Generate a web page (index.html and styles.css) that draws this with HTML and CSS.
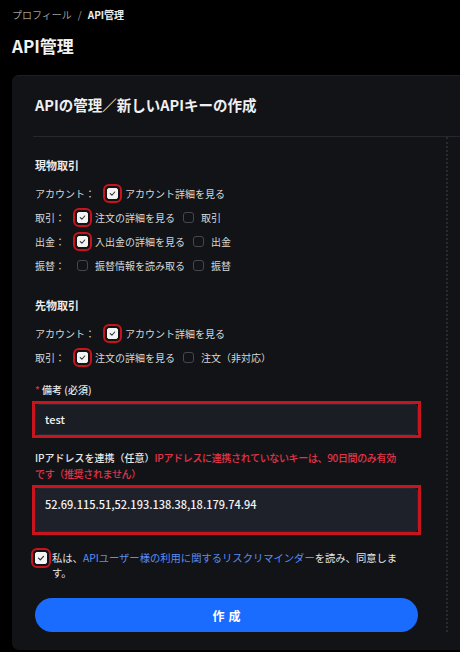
FILE: index.html
```html
<!DOCTYPE html>
<html lang="ja">
<head>
  <meta charset="UTF-8" />
  <meta name="viewport" content="width=device-width, initial-scale=1.0" />
  <title>API管理</title>
  <link rel="stylesheet" href="styles.css">
</head>
<body>

  <div class="crumbs">
    <span class="crumb-muted">プロフィール</span>
    <span class="crumb-sep">/</span>
    <span class="crumb-current">API管理</span>
  </div>

  <h1 class="page-title">API管理</h1>

  <div class="card">
    <h2 class="card-title">APIの管理／新しいAPIキーの作成</h2>

    <div class="card-body">
      <div class="form-col">

        <!-- 現物取引 -->
        <div class="group">
          <div class="group-title">現物取引</div>
          <div class="perm-row">
            <span class="perm-label">アカウント：</span>
            <span class="cb checked mark"><svg viewBox="0 0 12 12"><path d="M3 6.2 L5.2 8.3 L9 4"/></svg></span>
            <span class="opt">アカウント詳細を見る</span>
          </div>
          <div class="perm-row">
            <span class="perm-label">取引：</span>
            <span class="cb checked mark"><svg viewBox="0 0 12 12"><path d="M3 6.2 L5.2 8.3 L9 4"/></svg></span>
            <span class="opt">注文の詳細を見る</span>
            <span class="cb"></span>
            <span class="opt">取引</span>
          </div>
          <div class="perm-row">
            <span class="perm-label">出金：</span>
            <span class="cb checked mark"><svg viewBox="0 0 12 12"><path d="M3 6.2 L5.2 8.3 L9 4"/></svg></span>
            <span class="opt">入出金の詳細を見る</span>
            <span class="cb"></span>
            <span class="opt">出金</span>
          </div>
          <div class="perm-row">
            <span class="perm-label">振替：</span>
            <span class="cb"></span>
            <span class="opt">振替情報を読み取る</span>
            <span class="cb"></span>
            <span class="opt">振替</span>
          </div>
        </div>

        <!-- 先物取引 -->
        <div class="group">
          <div class="group-title">先物取引</div>
          <div class="perm-row">
            <span class="perm-label">アカウント：</span>
            <span class="cb checked mark"><svg viewBox="0 0 12 12"><path d="M3 6.2 L5.2 8.3 L9 4"/></svg></span>
            <span class="opt">アカウント詳細を見る</span>
          </div>
          <div class="perm-row">
            <span class="perm-label">取引：</span>
            <span class="cb checked mark"><svg viewBox="0 0 12 12"><path d="M3 6.2 L5.2 8.3 L9 4"/></svg></span>
            <span class="opt">注文の詳細を見る</span>
            <span class="cb"></span>
            <span class="opt">注文（非対応）</span>
          </div>
        </div>

        <div class="field">
          <div class="field-label"><span class="req">*</span> 備考 (必須)</div>
          <div class="mark-box">
            <div class="input">test</div>
          </div>
        </div>

        <div class="field">
          <div class="field-label">IPアドレスを連携（任意）<span class="warn">IPアドレスに連携されていないキーは、90日間のみ有効<br>です（推奨されません）</span></div>
          <div class="mark-box">
            <div class="input textarea">52.69.115.51,52.193.138.38,18.179.74.94</div>
          </div>
        </div>

        <div class="agree">
          <span class="cb checked mark big"><svg viewBox="0 0 12 12"><path d="M3 6.2 L5.2 8.3 L9 4"/></svg></span>
          <span class="agree-text">私は、<span class="link">APIユーザー様の利用に関するリスクリマインダー</span>を読み、同意します。</span>
        </div>

        <button class="btn">作成</button>
      </div>
    </div>
  </div>

</body>
</html>
```

FILE: styles.css
```css
body {
  margin: 0;
  background: #000;
  color: #e6e6e6;
  font-family: "Noto Sans CJK JP", "Noto Sans", sans-serif;
  overflow: hidden;
}
.crumbs {
  display: flex;
  align-items: center;
  gap: 6px;
  padding: 7px 12px 0;
  height: 16px;
  font-size: 10px;
  line-height: 16px;
}
.crumb-muted {
  color: #9c9c9c;
}
.crumb-sep {
  color: #9c9c9c;
}
.crumb-current {
  color: #ececec;
  font-weight: bold;
}
.page-title {
  margin: 0;
  padding: 10px 12px 0;
  font-size: 17px;
  line-height: 26px;
  color: #f2f2f2;
  font-weight: bold;
}
.card {
  margin: 16px 0 0 12px;
  width: 480px;
  background: #121317;
  border-top: 1px solid #1e1f24;
  border-radius: 7px;
  padding-bottom: 18px;
}
.card-title {
  margin: 0 0 0 21px;
  padding: 20px 0 22px 2px;
  font-size: 14.5px;
  line-height: 18px;
  font-weight: bold;
  color: #f0f0f0;
  border-bottom: 1px solid #26272c;
}
.card-body {
  padding-left: 23px;
}
.form-col {
  width: 383px;
  padding: 20px 28px 0 0;
  border-right: 2px dotted #2a2b31;
}
.group {
  margin-bottom: 20px;
}
.group:nth-child(2) {
  margin-bottom: 13px;
}
.group-title {
  font-size: 11px;
  line-height: 16px;
  font-weight: bold;
  color: #ececec;
  margin-bottom: 8px;
}
.perm-row {
  display: flex;
  align-items: center;
  height: 24px;
  font-size: 10px;
  color: #d8d8d8;
}
.perm-label {
  margin-right: 12px;
}
.opt {
  margin-left: 7px;
  margin-right: 8px;
}
.cb {
  display: inline-block;
  box-sizing: border-box;
  width: 11px;
  height: 11px;
  border: 1px solid #45474e;
  border-radius: 3px;
}
.cb.checked {
  background: #f3f3f3;
  border-color: #f3f3f3;
  border-radius: 2px;
}
.cb svg {
  display: block;
  width: 100%;
  height: 100%;
}
.cb svg path {
  fill: none;
  stroke: #2a2a2e;
  stroke-width: 1.4;
  stroke-linecap: round;
  stroke-linejoin: round;
}
.mark {
  outline: 2px solid #c8141c;
  outline-offset: 2px;
}
.cb.big {
  width: 12px;
  height: 12px;
}
.field {
  margin-bottom: 15px;
}
.field-label {
  font-size: 10px;
  line-height: 16px;
  color: #e8e8e8;
  font-weight: 500;
  margin-bottom: 6px;
}
.req {
  color: #e0303c;
}
.warn {
  color: #e2344a;
  letter-spacing: -0.35px;
}
.mark-box {
  outline: 3px solid #c8141c;
}
.input {
  box-sizing: border-box;
  height: 31px;
  padding: 0 9px;
  background: #1b1d25;
  border: 1px solid #262832;
  border-radius: 4px;
  font-size: 11px;
  line-height: 29px;
  font-weight: 500;
  color: #f2f2f2;
}
.textarea {
  height: 44px;
  line-height: 14px;
  padding-top: 8px;
  background: #1f212a;
}
.agree {
  display: flex;
  align-items: flex-start;
  margin-top: 18px;
  font-size: 10.3px;
  line-height: 15px;
  color: #e6e6e6;
}
.agree .cb {
  flex: none;
  margin-top: 2px;
  margin-right: 5px;
}
.agree-text {
  padding-right: 20px;
}
.link {
  color: #5b8ef5;
}
.btn {
  display: block;
  width: 100%;
  height: 34px;
  margin-top: 18px;
  border: none;
  border-radius: 17px;
  background: #1a6cff;
  color: #fff;
  font-family: inherit;
  font-size: 12px;
  font-weight: bold;
  letter-spacing: 4px;
  text-indent: 4px;
}
```
